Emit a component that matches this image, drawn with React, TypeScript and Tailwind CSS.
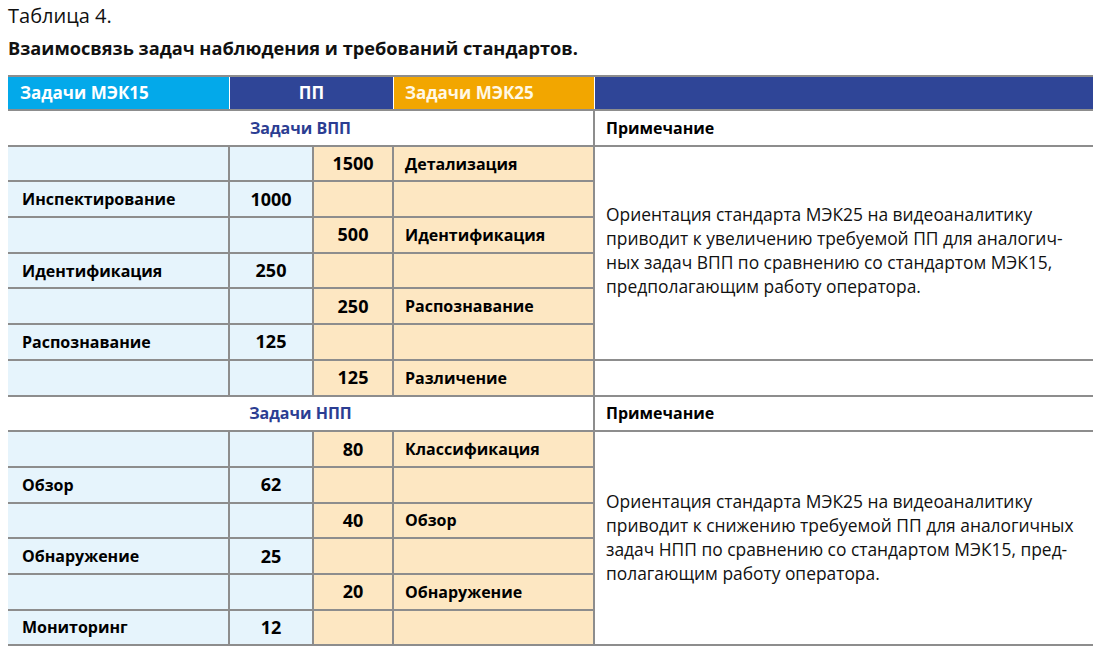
const font = { fontFamily: '"Open Sans", "Noto Sans", sans-serif' }

type Row = { a?: string; b?: string; c?: string; d?: string }

const vppRows: Row[] = [
  { c: "1500", d: "Детализация" },
  { a: "Инспектирование", b: "1000" },
  { c: "500", d: "Идентификация" },
  { a: "Идентификация", b: "250" },
  { c: "250", d: "Распознавание" },
  { a: "Распознавание", b: "125" },
  { c: "125", d: "Различение" },
]

const nppRows: Row[] = [
  { c: "80", d: "Классификация" },
  { a: "Обзор", b: "62" },
  { c: "40", d: "Обзор" },
  { a: "Обнаружение", b: "25" },
  { c: "20", d: "Обнаружение" },
  { a: "Мониторинг", b: "12" },
]

function DataCells({ row }: { row: Row }) {
  return (
    <>
      <div className="bg-[#e6f4fc] flex items-center pl-[14px] font-bold text-[16px] text-black">{row.a}</div>
      <div className="bg-[#e6f4fc] flex items-center justify-center font-bold text-[18px] text-black">{row.b}</div>
      <div className="bg-[#fde7c2] flex items-center justify-center font-bold text-[18px] text-black">{row.c}</div>
      <div className="bg-[#fde7c2] flex items-center pl-[11px] font-bold text-[16px] text-black">{row.d}</div>
    </>
  )
}

function SectionHead({ title }: { title: string }) {
  return (
    <>
      <div className="col-span-4 bg-white flex items-center justify-center font-bold text-[16px] text-[#2b3d92]">
        {title}
      </div>
      <div className="bg-white flex items-center pl-[11px] font-bold text-[16px] text-black">Примечание</div>
    </>
  )
}

function Note({ className, lines }: { className: string; lines: string[] }) {
  return (
    <div className={`${className} row-span-6 bg-white flex items-center pl-[11px] text-[17.4px] leading-[24px] text-[#111]`}>
      <p>
        {lines.map((l, i) => (
          <span key={i} className="block whitespace-nowrap">
            {l}
          </span>
        ))}
      </p>
    </div>
  )
}

export default function App() {
  return (
    <div className="w-[1100px] h-[652px] bg-white overflow-hidden px-2 pt-[4px]" style={font}>
      <div className="text-[20px] leading-[24px] text-[#111]">Таблица 4.</div>
      <div className="mt-[8px] text-[18.2px] leading-[24px] font-bold text-[#111]">
        Взаимосвязь задач наблюдения и требований стандартов.
      </div>

      <div className="mt-[15px] w-[1085px]">
        {/* header */}
        <div className="flex h-[36px] border-y-2 border-[#8d8d8d] text-white font-bold text-[17px]">
          <div className="w-[221px] bg-[#03a9ea] flex items-center pl-[12px]">Задачи МЭК15</div>
          <div className="w-[164px] bg-[#2f4597] border-l border-white flex items-center justify-center">ПП</div>
          <div className="w-[201px] bg-[#f2a600] border-l border-white flex items-center pl-[11px] text-[#fff8e6]">
            Задачи МЭК25
          </div>
          <div className="flex-1 bg-[#2f4597] border-l border-white" />
        </div>

        {/* body */}
        <div className="grid grid-cols-[220px_82px_78px_199px_498px] auto-rows-[33.7px] gap-[2px] bg-[#8d8d8d] border-b-2 border-[#8d8d8d]">
          <SectionHead title="Задачи ВПП" />
          {vppRows.map((r, i) => (
            <div key={i} className="contents">
              <DataCells row={r} />
              {i === 0 && (
                <Note
                  className="pb-[6px]"
                  lines={[
                    "Ориентация стандарта МЭК25 на видеоаналитику",
                    "приводит к увеличению требуемой ПП для аналогич-",
                    "ных задач ВПП по сравнению со стандартом МЭК15,",
                    "предполагающим работу оператора.",
                  ]}
                />
              )}
              {i === 6 && <div className="bg-white" />}
            </div>
          ))}

          <SectionHead title="Задачи НПП" />
          {nppRows.map((r, i) => (
            <div key={i} className="contents">
              <DataCells row={r} />
              {i === 0 && (
                <Note
                  className="pb-[2px]"
                  lines={[
                    "Ориентация стандарта МЭК25 на видеоаналитику",
                    "приводит к снижению требуемой ПП для аналогичных",
                    "задач НПП по сравнению со стандартом МЭК15, пред-",
                    "полагающим работу оператора.",
                  ]}
                />
              )}
            </div>
          ))}
        </div>
      </div>
    </div>
  )
}
